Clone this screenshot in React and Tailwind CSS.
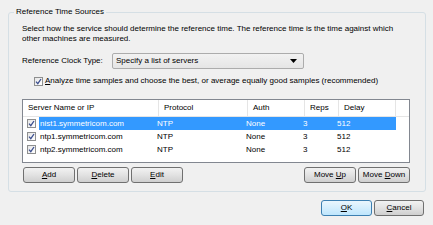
import React from 'react';

const ROWS = [
  { name: 'nist1.symmetricom.com', protocol: 'NTP', auth: 'None', reps: '3', delay: '512', selected: true },
  { name: 'ntp1.symmetricom.com', protocol: 'NTP', auth: 'None', reps: '3', delay: '512' },
  { name: 'ntp2.symmetricom.com', protocol: 'NTP', auth: 'None', reps: '3', delay: '512' },
];

function Check({ className = '' }) {
  return (
    <span className={`flex items-center justify-center w-[9px] h-[9px] border border-[#8e8f8f] bg-gradient-to-br from-[#e6e6e6] to-[#ffffff] shrink-0 ${className}`}>
      <svg width="7" height="7" viewBox="0 0 7 7">
        <path d="M1 3.6 L2.8 5.6 L6 1" fill="none" stroke="#3c4f8f" strokeWidth="1.3" />
      </svg>
    </span>
  );
}

function Btn({ children, w = 'w-[52px]', primary = false }) {
  return (
    <button
      className={`${w} h-[16px] rounded-[3px] border text-[8px] leading-none text-black flex items-center justify-center
        ${primary
          ? 'border-[#3c7fb1] bg-gradient-to-b from-[#eaf6fd] to-[#bee6fd]'
          : 'border-[#707070] bg-gradient-to-b from-[#f2f2f2] via-[#e2e2e2] to-[#cfcfcf]'}`}
    >
      <span>{children}</span>
    </button>
  );
}

function Header({ children, w }) {
  return (
    <div className={`${w} h-full flex items-center pl-[5px] border-r border-[#e5e5e5] shrink-0`}>
      {children}
    </div>
  );
}

export default function App() {
  return (
    <div className="w-[433px] h-[225px] bg-[#f0f0f0] overflow-hidden text-[8px] leading-[10px] text-black" style={{ fontFamily: '"Liberation Sans", Arial, sans-serif' }}>
      {/* Group box */}
      <div className="relative mt-[12px] ml-[8px] w-[418px] h-[180px] border border-[#d5dfe5] rounded-[3px] pt-[11px] pl-[13px]">
        <span className="absolute -top-[6px] left-[5px] px-[2px] bg-[#f0f0f0] text-[#000]">Reference Time Sources</span>

        <p>Select how the service should determine the reference time. The reference time is the time against which</p>
        <p>other machines are measured.</p>

        <div className="flex items-center mt-[9px] h-[16px]">
          <span className="w-[90px]">Reference Clock Type:</span>
          <div className="w-[192px] h-[16px] border border-[#acacac] rounded-[2px] bg-gradient-to-b from-[#f2f2f2] to-[#e5e5e5] flex items-center pl-[3px] pr-[6px] justify-between">
            <span>Specify a list of servers</span>
            <svg width="7" height="4" viewBox="0 0 7 4"><path d="M0 0 H7 L3.5 4 Z" fill="#000" /></svg>
          </div>
        </div>

        <div className="flex items-center mt-[7px] ml-[12px] h-[10px] gap-[2px]">
          <Check />
          <span><u>A</u>nalyze time samples and choose the best, or average equally good samples (recommended)</span>
        </div>

        {/* List view */}
        <div className="mt-[13px] w-[388px] h-[64px] border border-[#828790] bg-white">
          <div className="flex h-[17px] border-b border-[#e5e5e5] bg-white">
            <Header w="w-[136px]">Server Name or IP</Header>
            <Header w="w-[89px]">Protocol</Header>
            <Header w="w-[57px]">Auth</Header>
            <Header w="w-[34px]">Reps</Header>
            <Header w="w-[57px]">Delay</Header>
          </div>
          {ROWS.map((r) => (
            <div key={r.name} className="flex items-center h-[13px] pl-[4px]">
              <Check />
              <div className={`flex items-center h-[13px] ml-[3px] w-[357px] ${r.selected ? 'bg-[#3399ff] text-white' : ''}`}>
                <span className="w-[118px] pl-[1px]">{r.name}</span>
                <span className="w-[89px]">{r.protocol}</span>
                <span className="w-[57px]">{r.auth}</span>
                <span className="w-[34px]">{r.reps}</span>
                <span className="w-[50px]">{r.delay}</span>
              </div>
            </div>
          ))}
        </div>

        <div className="flex mt-[4px] w-[388px]">
          <div className="flex gap-[2px] ml-[1px]">
            <Btn><u>A</u>dd</Btn>
            <Btn><u>D</u>elete</Btn>
            <Btn><u>E</u>dit</Btn>
          </div>
          <div className="flex gap-[2px] ml-auto">
            <Btn>Move <u>U</u>p</Btn>
            <Btn>Move <u>D</u>own</Btn>
          </div>
        </div>
      </div>

      <div className="flex justify-end gap-[2px] mt-[8px] mr-[9px]">
        <Btn w="w-[51px]" primary><u>O</u>K</Btn>
        <Btn w="w-[50px]"><u>C</u>ancel</Btn>
      </div>
    </div>
  );
}
